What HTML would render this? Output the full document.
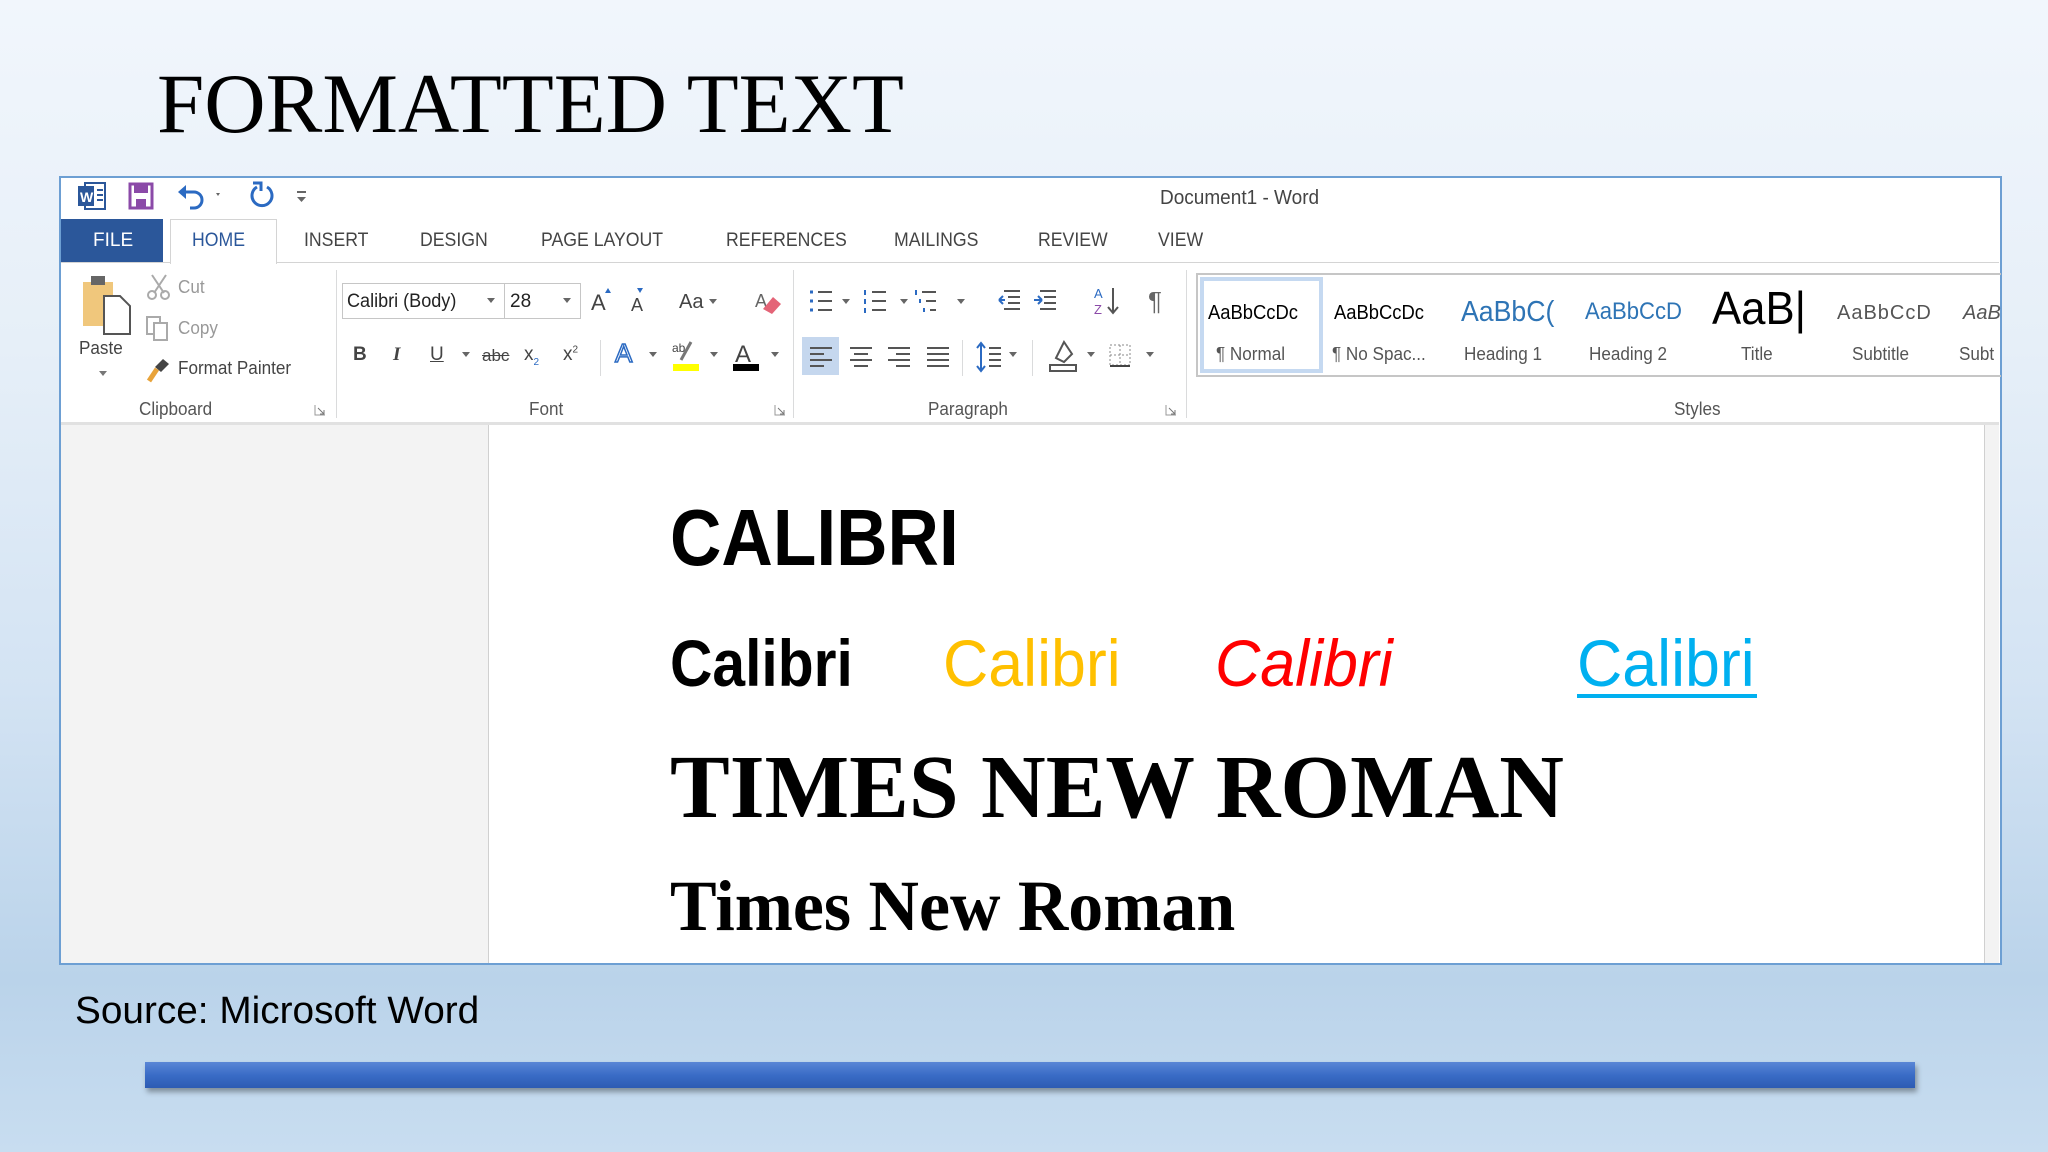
<!DOCTYPE html>
<html><head><meta charset="utf-8"><style>
*{margin:0;padding:0;box-sizing:border-box}
body{width:2048px;height:1152px;overflow:hidden;position:relative;font-family:"Liberation Sans",sans-serif;
background:linear-gradient(180deg,#f1f6fc 0%,#e6eff8 30%,#d3e3f3 60%,#bad3ea 85%,#c8ddf0 100%)}
.a{position:absolute;white-space:nowrap;line-height:1}
.t{color:#444;font-size:19px;transform:scaleX(0.93);transform-origin:left}
.g{color:#555;font-size:18px;transform:scaleX(0.95);transform-origin:left}
.sep{position:absolute;width:1px;background:#dadbdc}
.ic{position:absolute}
</style></head><body>
<div class="a" style="left:157px;top:62px;font-family:'Liberation Serif',serif;font-size:85px;color:#000">FORMATTED TEXT</div>

<div style="position:absolute;left:59px;top:176px;width:1943px;height:789px;border:2px solid #6d9fd3;background:#fff"></div>
<svg class="ic" style="left:76px;top:181px" width="32" height="30"><rect x="9" y="2" width="20" height="26" fill="#fff" stroke="#2b579a" stroke-width="2"/><rect x="2" y="5" width="16" height="20" fill="#2b579a"/><text x="4" y="21" fill="#fff" font-size="14" font-family="Liberation Sans" font-weight="bold">W</text><path d="M21 9h6M21 14h6M21 19h6" stroke="#2b579a" stroke-width="2"/></svg>
<svg class="ic" style="left:128px;top:182px" width="26" height="28"><rect x="2" y="2" width="22" height="24" fill="none" stroke="#8b4aa8" stroke-width="3"/><rect x="6" y="3" width="14" height="8" fill="#8b4aa8"/><rect x="8" y="17" width="10" height="9" fill="#8b4aa8"/></svg>
<svg class="ic" style="left:176px;top:182px" width="48" height="28"><path d="M8 10h10a8 8 0 0 1 0 16h-4" fill="none" stroke="#2b6ac2" stroke-width="3"/><path d="M2 10l8-7v14z" fill="#2b6ac2"/><path d="M40 11l4 0-2 3z" fill="#666"/></svg>
<svg class="ic" style="left:247px;top:181px" width="30" height="30"><path d="M10 6a10 10 0 1 0 10 0" fill="none" stroke="#2b6ac2" stroke-width="3"/><path d="M6 2h8v8" fill="none" stroke="#2b6ac2" stroke-width="3"/></svg>
<svg class="ic" style="left:296px;top:190px" width="12" height="14"><path d="M1 2h9" stroke="#666" stroke-width="2"/><path d="M1 7h9l-4.5 5z" fill="#666"/></svg>
<div class="a" style="left:1160px;top:188px;font-size:20px;color:#444;transform:scaleX(0.95);transform-origin:left">Document1 - Word</div>

<div style="position:absolute;left:61px;top:219px;width:102px;height:43px;background:#2b579a"></div>
<div class="a" style="left:93px;top:231px;font-size:19px;color:#fff">FILE</div>
<div style="position:absolute;left:170px;top:219px;width:107px;height:45px;border:1px solid #d4d4d4;border-bottom:none;background:#fff"></div>
<div class="a" style="left:192px;top:231px;font-size:19px;color:#2b579a;transform:scaleX(0.93);transform-origin:left">HOME</div>
<div style="position:absolute;left:61px;top:262px;width:109px;height:1px;background:#d4d4d4"></div>
<div style="position:absolute;left:277px;top:262px;width:1722px;height:1px;background:#d4d4d4"></div>
<div class="a t" style="left:304px;top:231px">INSERT</div>
<div class="a t" style="left:420px;top:231px">DESIGN</div>
<div class="a t" style="left:541px;top:231px">PAGE LAYOUT</div>
<div class="a t" style="left:726px;top:231px">REFERENCES</div>
<div class="a t" style="left:894px;top:231px">MAILINGS</div>
<div class="a t" style="left:1038px;top:231px">REVIEW</div>
<div class="a t" style="left:1158px;top:231px">VIEW</div>

<div style="position:absolute;left:61px;top:422px;width:1938px;height:3px;background:#e1e1e1"></div>
<div class="sep" style="left:336px;top:270px;height:148px"></div>
<div class="sep" style="left:793px;top:270px;height:148px"></div>
<div class="sep" style="left:1186px;top:270px;height:148px"></div>
<svg class="ic" style="left:80px;top:274px" width="54" height="62"><rect x="3" y="8" width="30" height="44" fill="#f0c77c"/><rect x="11" y="2" width="14" height="9" fill="#666"/><path d="M24 22h16l10 10v28H24z" fill="#fff" stroke="#555" stroke-width="2"/></svg>
<div class="a g" style="left:79px;top:339px;color:#444">Paste</div>
<svg class="ic" style="left:98px;top:370px" width="10" height="8"><path d="M1 1h8l-4 5z" fill="#777"/></svg>
<svg class="ic" style="left:146px;top:273px" width="26" height="28"><path d="M6 2l12 18M20 2L8 20" stroke="#aaa" stroke-width="2"/><circle cx="6" cy="22" r="4" fill="none" stroke="#aaa" stroke-width="2"/><circle cx="19" cy="22" r="4" fill="none" stroke="#aaa" stroke-width="2"/></svg>
<div class="a g" style="left:178px;top:278px;color:#999">Cut</div>
<svg class="ic" style="left:145px;top:315px" width="26" height="28"><rect x="2" y="2" width="13" height="17" fill="#fff" stroke="#aaa" stroke-width="2"/><rect x="9" y="8" width="13" height="17" fill="#fff" stroke="#aaa" stroke-width="2"/></svg>
<div class="a g" style="left:178px;top:319px;color:#999">Copy</div>
<svg class="ic" style="left:145px;top:355px" width="28" height="30"><path d="M4 26l8-12" stroke="#e8a33a" stroke-width="5"/><path d="M10 12l8-8 6 5-8 8z" fill="#444"/></svg>
<div class="a g" style="left:178px;top:359px;color:#444">Format Painter</div>
<div class="a g" style="left:139px;top:400px">Clipboard</div>
<svg class="ic" style="left:314px;top:404px" width="12" height="12"><path d="M1 1v10h10" fill="none" stroke="#999"/><path d="M4 4l6 6M10 6v4h-4" fill="none" stroke="#777"/></svg>
<div style="position:absolute;left:342px;top:283px;width:163px;height:36px;border:1px solid #c6c6c6"></div>
<div style="position:absolute;left:505px;top:283px;width:76px;height:36px;border:1px solid #c6c6c6;border-left:none"></div>
<div class="a" style="left:347px;top:292px;font-size:19px;color:#222;transform:scaleX(0.95);transform-origin:left">Calibri (Body)</div>
<div class="a" style="left:510px;top:292px;font-size:19px;color:#222">28</div>
<svg class="ic" style="left:486px;top:297px" width="10" height="8"><path d="M1 1h8l-4 5z" fill="#666"/></svg>
<svg class="ic" style="left:562px;top:297px" width="10" height="8"><path d="M1 1h8l-4 5z" fill="#666"/></svg>
<div class="a" style="left:591px;top:292px;font-size:22px;color:#444">A</div>
<div class="a" style="left:631px;top:296px;font-size:18px;color:#444">A</div>
<svg class="ic" style="left:604px;top:286px" width="40" height="10"><path d="M1 7l3-5 3 5z" fill="#2b6ac2"/><path d="M33 2l3 5 3-5z" fill="#2b6ac2"/></svg>
<div class="a" style="left:679px;top:292px;font-size:20px;color:#444">Aa</div>
<svg class="ic" style="left:708px;top:298px" width="10" height="8"><path d="M1 1h8l-4 5z" fill="#666"/></svg>
<svg class="ic" style="left:755px;top:285px" width="28" height="32"><text x="0" y="22" font-size="18" fill="#666" font-family="Liberation Sans">A</text><path d="M8 24l10-12 8 7-9 10z" fill="#e46477"/></svg>
<div class="a" style="left:353px;top:345px;font-size:19px;font-weight:bold;color:#444">B</div>
<div class="a" style="left:393px;top:345px;font-size:19px;font-style:italic;font-family:'Liberation Serif',serif;font-weight:bold;color:#444">I</div>
<div class="a" style="left:430px;top:345px;font-size:19px;text-decoration:underline;color:#444">U</div>
<svg class="ic" style="left:461px;top:351px" width="10" height="8"><path d="M1 1h8l-4 5z" fill="#666"/></svg>
<div class="a" style="left:482px;top:347px;font-size:17px;text-decoration:line-through;color:#444">abc</div>
<div class="a" style="left:524px;top:345px;font-size:19px;color:#444">x<sub style="font-size:10px;color:#2b6ac2">2</sub></div>
<div class="a" style="left:563px;top:345px;font-size:19px;color:#444">x<sup style="font-size:10px">2</sup></div>
<div class="sep" style="left:600px;top:340px;height:36px"></div>
<div class="a" style="left:615px;top:340px;font-size:26px;color:#fff;-webkit-text-stroke:1.5px #2b6ac2">A</div>
<svg class="ic" style="left:648px;top:351px" width="10" height="8"><path d="M1 1h8l-4 5z" fill="#666"/></svg>
<svg class="ic" style="left:671px;top:338px" width="30" height="34"><text x="1" y="14" font-size="12" fill="#444" font-family="Liberation Sans">ab</text><path d="M10 22l10-18" stroke="#777" stroke-width="3"/><rect x="2" y="26" width="26" height="7" fill="#ffff00"/></svg>
<svg class="ic" style="left:709px;top:351px" width="10" height="8"><path d="M1 1h8l-4 5z" fill="#666"/></svg>
<svg class="ic" style="left:731px;top:338px" width="30" height="34"><text x="4" y="24" font-size="24" fill="#444" font-family="Liberation Sans">A</text><rect x="2" y="26" width="26" height="7" fill="#000"/></svg>
<svg class="ic" style="left:770px;top:351px" width="10" height="8"><path d="M1 1h8l-4 5z" fill="#666"/></svg>
<div class="a g" style="left:529px;top:400px">Font</div>
<svg class="ic" style="left:774px;top:404px" width="12" height="12"><path d="M1 1v10h10" fill="none" stroke="#999"/><path d="M4 4l6 6M10 6v4h-4" fill="none" stroke="#777"/></svg>
<svg class="ic" style="left:806px;top:286px" width="170" height="32" fill="none" stroke="#555" stroke-width="2">
<path d="M12 6h14M12 15h14M12 24h14"/><path d="M4 6h3M4 15h3M4 24h3" stroke="#2b6ac2" stroke-width="3"/>
<path d="M66 6h14M66 15h14M66 24h14"/><path d="M59 4v5M59 13v5M59 22v5" stroke="#2b6ac2"/>
<path d="M116 6h14M120 15h10M124 24h6"/><path d="M110 4v5M114 13v4M118 22v4" stroke="#2b6ac2"/>
</svg>
<svg class="ic" style="left:841px;top:298px" width="130" height="8" fill="#666"><path d="M1 1h8l-4 5z"/><path d="M59 1h8l-4 5z"/><path d="M116 1h8l-4 5z"/></svg>
<svg class="ic" style="left:996px;top:286px" width="70" height="30" fill="none" stroke="#555" stroke-width="2"><path d="M8 5h16M12 11h12M12 17h12M8 23h16"/><path d="M9 14l-6 0M3 14l4-4M3 14l4 4" stroke="#2b6ac2"/><path d="M44 5h16M48 11h12M48 17h12M44 23h16"/><path d="M38 14h8M46 14l-4-4M46 14l-4 4" stroke="#2b6ac2"/></svg>
<svg class="ic" style="left:1092px;top:284px" width="30" height="34"><text x="2" y="14" font-size="13" fill="#2b6ac2" font-family="Liberation Sans">A</text><text x="2" y="30" font-size="13" fill="#8b4aa8" font-family="Liberation Sans">Z</text><path d="M21 4v24M16 23l5 6 5-6" fill="none" stroke="#555" stroke-width="2"/></svg>
<div class="a" style="left:1148px;top:288px;font-size:26px;color:#666">¶</div>
<div style="position:absolute;left:802px;top:337px;width:37px;height:38px;background:#c5d7ee"></div>
<svg class="ic" style="left:808px;top:345px" width="160" height="24" fill="none" stroke="#555" stroke-width="2"><path d="M2 3h22M2 9h14M2 15h22M2 21h14"/><path d="M42 3h22M46 9h14M42 15h22M46 21h14"/><path d="M80 3h22M88 9h14M80 15h22M88 21h14"/><path d="M119 3h22M119 9h22M119 15h22M119 21h22"/></svg>
<div class="sep" style="left:962px;top:340px;height:36px"></div>
<svg class="ic" style="left:974px;top:340px" width="40" height="34" fill="none" stroke-width="2"><path d="M7 3v28M3 8l4-5 4 5M3 26l4 5 4-5" stroke="#2b6ac2"/><path d="M15 8h12M15 14h12M15 20h12M15 26h12" stroke="#555"/></svg>
<svg class="ic" style="left:1008px;top:351px" width="10" height="8"><path d="M1 1h8l-4 5z" fill="#666"/></svg>
<div class="sep" style="left:1032px;top:340px;height:36px"></div>
<svg class="ic" style="left:1046px;top:338px" width="34" height="36" fill="none" stroke="#555" stroke-width="2"><path d="M10 20l8-16 8 12-8 8z"/><rect x="4" y="27" width="26" height="6"/></svg>
<svg class="ic" style="left:1086px;top:351px" width="10" height="8"><path d="M1 1h8l-4 5z" fill="#666"/></svg>
<svg class="ic" style="left:1108px;top:343px" width="26" height="26" fill="none" stroke="#888" stroke-width="1" stroke-dasharray="2 2"><path d="M2 2h20v20H2zM12 2v20M2 12h20"/><path d="M2 23h20" stroke="#444" stroke-dasharray="none" stroke-width="2"/></svg>
<svg class="ic" style="left:1145px;top:351px" width="10" height="8"><path d="M1 1h8l-4 5z" fill="#666"/></svg>
<div class="a g" style="left:928px;top:400px">Paragraph</div>
<svg class="ic" style="left:1165px;top:404px" width="12" height="12"><path d="M1 1v10h10" fill="none" stroke="#999"/><path d="M4 4l6 6M10 6v4h-4" fill="none" stroke="#777"/></svg>
<div style="position:absolute;left:1196px;top:273px;width:805px;height:104px;border:2px solid #c6c6c6;border-right:none"></div>
<div style="position:absolute;left:1200px;top:277px;width:123px;height:96px;border:4px solid #c5d9f1"></div>
<div class="a" style="left:1208px;top:303px;font-size:20px;color:#000;transform:scaleX(0.92);transform-origin:left">AaBbCcDc</div>
<div class="a" style="left:1334px;top:303px;font-size:20px;color:#000;transform:scaleX(0.92);transform-origin:left">AaBbCcDc</div>
<div class="a" style="left:1461px;top:298px;font-size:29px;color:#2e74b5;transform:scaleX(0.92);transform-origin:left">AaBbC(</div>
<div class="a" style="left:1585px;top:300px;font-size:24px;color:#2e74b5;transform:scaleX(0.92);transform-origin:left">AaBbCcD</div>
<div class="a" style="left:1712px;top:285px;font-size:46px;color:#000;transform:scaleX(0.95);transform-origin:left">AaB|</div>
<div class="a" style="left:1837px;top:303px;font-size:20px;color:#555;letter-spacing:1px">AaBbCcD</div>
<div class="a" style="left:1963px;top:303px;font-size:20px;color:#555;font-style:italic">AaB</div>
<div class="a g" style="left:1216px;top:345px">¶ Normal</div>
<div class="a g" style="left:1332px;top:345px">¶ No Spac...</div>
<div class="a g" style="left:1464px;top:345px">Heading 1</div>
<div class="a g" style="left:1589px;top:345px">Heading 2</div>
<div class="a g" style="left:1741px;top:345px">Title</div>
<div class="a g" style="left:1852px;top:345px">Subtitle</div>
<div class="a g" style="left:1959px;top:345px">Subt</div>
<div class="a g" style="left:1674px;top:400px">Styles</div>

<div style="position:absolute;left:61px;top:425px;width:427px;height:538px;background:#f3f3f3"></div>
<div style="position:absolute;left:488px;top:425px;width:1px;height:538px;background:#d0d0d0"></div>
<div style="position:absolute;left:1984px;top:425px;width:1px;height:538px;background:#d0d0d0"></div>
<div style="position:absolute;left:1985px;top:425px;width:14px;height:538px;background:#f3f3f3"></div>

<div class="a" style="left:670px;top:498px;font-size:80px;font-weight:bold;color:#000;transform:scaleX(0.89);transform-origin:left">CALIBRI</div>
<div class="a" style="left:670px;top:630px;font-size:66px;font-weight:bold;color:#000;transform:scaleX(0.89);transform-origin:left">Calibri</div>
<div class="a" style="left:943px;top:630px;font-size:66px;color:#ffc000;transform:scaleX(0.95);transform-origin:left">Calibri</div>
<div class="a" style="left:1215px;top:630px;font-size:66px;font-style:italic;color:#ff0000;transform:scaleX(0.95);transform-origin:left">Calibri</div>
<div class="a" style="left:1577px;top:630px;font-size:66px;color:#00b0f0;transform:scaleX(0.95);transform-origin:left">Calibri</div>
<div style="position:absolute;left:1577px;top:694px;width:180px;height:4px;background:#00b0f0"></div>
<div class="a" style="left:670px;top:743px;font-family:'Liberation Serif',serif;font-weight:bold;font-size:90px;color:#000;transform:scaleX(0.995);transform-origin:left">TIMES NEW ROMAN</div>
<div class="a" style="left:670px;top:870px;font-family:'Liberation Serif',serif;font-weight:bold;font-size:72px;color:#000;transform:scaleX(0.97);transform-origin:left">Times New Roman</div>

<div class="a" style="left:75px;top:992px;font-size:38px;color:#000;transform:scaleX(1.02);transform-origin:left">Source: Microsoft Word</div>
<div style="position:absolute;left:145px;top:1062px;width:1770px;height:26px;background:linear-gradient(180deg,#5a86d6 0%,#3a6cc6 50%,#2d5bb3 100%);box-shadow:2px 4px 5px rgba(0,0,0,0.35)"></div>
</body></html>
